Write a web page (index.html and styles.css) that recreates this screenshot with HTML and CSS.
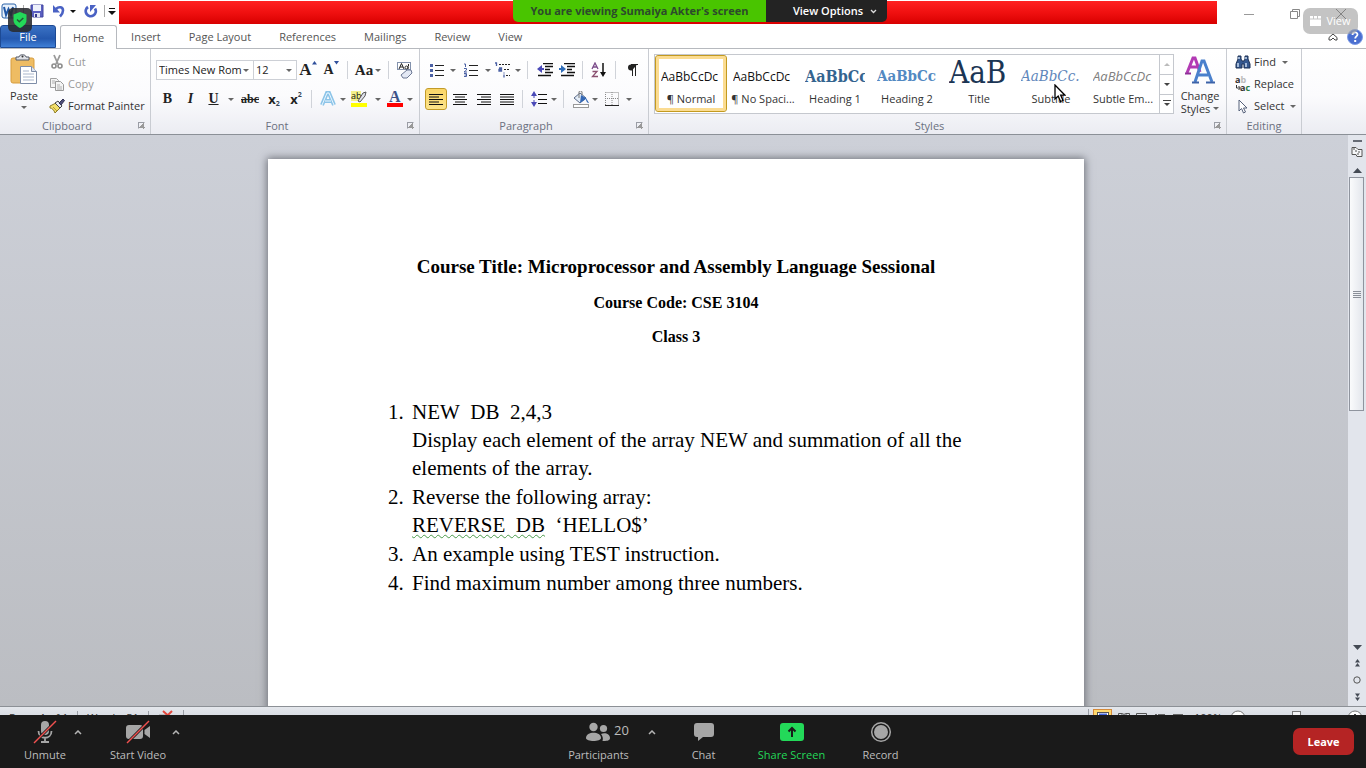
FILE: index.html
```html
<!DOCTYPE html>
<html lang="en">
<head>
<meta charset="utf-8">
<title>Sumaiya Akter's screen</title>
<link rel="stylesheet" href="styles.css">
</head>
<body>
<div class="word">
  <header class="titlebar">
    <div class="quick">
      <svg width="16" height="18" viewBox="0 0 16 18"><rect x="1" y="2" width="14" height="14" rx="2" fill="#e8f1fb" stroke="#2a62a8"/><path d="M3 5l2 8 2.500-6 2.500 6 2-8" fill="none" stroke="#1f56a5" stroke-width="2"/></svg>
      <span class="quick-sep"></span>
      <button class="plain" aria-label="Save"><svg width="14" height="14" viewBox="0 0 14 14"><path d="M1 1h12v12H2.500L1 11.500z" fill="#5a5fc0" stroke="#4347a0"/><rect x="3" y="1" width="8" height="6" fill="#eef1fb"/><rect x="4" y="9" width="6" height="4" fill="#dfe3ef"/><rect x="5" y="10" width="2" height="3" fill="#34388a"/></svg></button>
      <button class="plain undo" aria-label="Undo"><svg width="14" height="14" viewBox="0 0 14 14"><path d="M4 5c3-3 7-2 7 1.500 0 2.500-1 4-3 6" fill="none" stroke="#4a62c4" stroke-width="2.600"/><path d="M1 1v7.500h7z" fill="#4a62c4"/></svg></button>
      <span class="caret dark"></span>
      <button class="plain redo" aria-label="Repeat"><svg width="14" height="14" viewBox="0 0 14 14"><path d="M4 3a5 5 0 1 0 7 1.500" fill="none" stroke="#4a62c4" stroke-width="2.800"/><path d="M6 1v7l6-7z" fill="#4a62c4"/></svg></button>
      <span class="quick-sep last"></span>
      <button class="plain" aria-label="Customize toolbar"><svg width="8" height="8" viewBox="0 0 8 8"><path d="M1 1.500h6" stroke="#111"/><path d="M0 4h8L4 8z" fill="#111"/></svg></button>
    </div>
    <div class="redaction"></div>
    <div class="window-buttons">
      <button class="plain" aria-label="Minimize"><svg width="12" height="12" viewBox="0 0 12 12"><path d="M1 6.500h10" stroke="#999"/></svg></button>
      <button class="plain" aria-label="Restore"><svg width="12" height="12" viewBox="0 0 12 12"><path d="M1.500 3.500h7v7h-7zM3.500 3V1.500h7v7H9" fill="none" stroke="#888"/></svg></button>
      <button class="plain" aria-label="Close"><svg width="12" height="12" viewBox="0 0 12 12"><path d="M1 1l10 10M11 1L1 11" stroke="#555"/></svg></button>
    </div>
  </header>

  <nav class="tabs">
    <button class="tab file">File</button>
    <button class="tab active">Home</button>
    <button class="tab">Insert</button>
    <button class="tab">Page Layout</button>
    <button class="tab">References</button>
    <button class="tab">Mailings</button>
    <button class="tab">Review</button>
    <button class="tab">View</button>
    <div class="tab-tools">
      <button class="plain" aria-label="Minimize ribbon"><svg width="10" height="8" viewBox="0 0 10 8"><path d="M1 4.500L5 1l4 3.500V7H7L5 5 3 7H1z" fill="#fff" stroke="#444"/></svg></button>
      <button class="plain" aria-label="Help"><svg width="16" height="16" viewBox="0 0 16 16"><circle cx="8" cy="8" r="7.500" fill="#4a6fd0" stroke="#7d9be6"/><path d="M5.500 6c0-3.500 5-3.300 5-.5 0 1.900-2.300 1.900-2.300 4" fill="none" stroke="#fff" stroke-width="1.800"/><rect x="7.200" y="11" width="2" height="2" fill="#fff"/></svg></button>
    </div>
  </nav>

  <section class="ribbon">
    <div class="group clipboard">
      <div class="group-body">
        <button class="big-button paste">
          <svg width="28" height="32" viewBox="0 0 28 32"><rect x="1" y="4" width="23" height="25" rx="2" fill="#eebc63" stroke="#d79d3e"/><path d="M6 6V3h3c0-3 7-3 7 0h3v3z" fill="#dfe1e6" stroke="#555b68"/><circle cx="12.500" cy="2.500" r="1" fill="#333"/><path d="M10.500 12.500h11l5 5v12h-16z" fill="#fff" stroke="#7e8da8"/><path d="M21.500 12.500v5h5" fill="#dde4f0" stroke="#7e8da8"/><path d="M13 17h6M13 20h11M13 23h11M13 26h11" stroke="#a9b6cc"/></svg>
          <span>Paste</span><span class="caret"></span>
        </button>
        <div class="stack">
          <button class="row-button disabled"><svg width="16" height="16" viewBox="0 0 16 16"><path d="M5 1l4 9M11 1L7 10" stroke="#9a9a9a" stroke-width="1.800"/><circle cx="5" cy="12" r="2" fill="none" stroke="#8d8d8d" stroke-width="1.600"/><circle cx="11" cy="12" r="2" fill="none" stroke="#8d8d8d" stroke-width="1.600"/></svg>Cut</button>
          <button class="row-button disabled"><svg width="16" height="16" viewBox="0 0 16 16"><path d="M1.500 2.500h6l2 2v7h-8z" fill="#f4f4f4" stroke="#a0a0a0"/><path d="M6.500 5.500h5l3 3v6h-8z" fill="#f4f4f4" stroke="#999"/><path d="M3 5h3M3 7h3M8 9h3M8 11h5M8 13h5" stroke="#b0b0b0"/></svg>Copy</button>
          <button class="row-button"><svg width="16" height="16" viewBox="0 0 16 16"><path d="M1 8l6-3 4 5-5 5c-1-3-3-5-5-5z" fill="#f2df6b" stroke="#8f7d28"/><path d="M4 9l4 4" stroke="#b59c30"/><path d="M6 5l3-2 4 5-2 2z" fill="#e9edf5" stroke="#444"/><path d="M10 5l4-4 1.500 1.500L12 7z" fill="#4d4d78" stroke="#333355"/></svg>Format Painter</button>
        </div>
      </div>
      <div class="caption"><span>Clipboard</span><button class="launcher" aria-label="Clipboard options"></button></div>
    </div>

    <div class="group font">
      <div class="group-body rows">
        <div class="tool-row">
          <span class="combo combo-font"><select aria-label="Font"><option>Times New Rom</option></select><span class="caret"></span></span>
          <span class="combo combo-size"><select aria-label="Font size"><option>12</option></select><span class="caret"></span></span>
          <button class="tool w22 glyph g17" aria-label="Grow font">A<svg class="tip" width="5" height="4" viewBox="0 0 5 4"><path d="M0 3.500h5L2.500 0z" fill="#2f4f9b"/></svg></button>
          <button class="tool w24 glyph g14" aria-label="Shrink font">A<svg class="tip" width="5" height="4" viewBox="0 0 5 4"><path d="M0 0h5L2.500 3.500z" fill="#2f4f9b"/></svg></button>
          <span class="bar"></span>
          <button class="tool w32 glyph g15" aria-label="Change case">Aa<span class="caret"></span></button>
          <span class="bar"></span>
          <button class="tool w24" aria-label="Clear formatting"><svg width="18" height="18" viewBox="0 0 18 18"><rect x="1.500" y="1.500" width="13" height="7" fill="#fff" stroke="#8392ad"/><path d="M3 8l2.500-5.500L8 8M4 6h3M12 5v3M12 6.500c0-2-3-2-3 0s3 2 3 0M12.500 3v2" stroke="#222" fill="none"/><path d="M5 14l6-5h4l1 3-5 5H7z" fill="#e3e8f4" stroke="#6c7894"/></svg></button>
        </div>
        <div class="tool-row">
          <button class="tool w23 glyph g14">B</button>
          <button class="tool w23 glyph g14 italic">I</button>
          <button class="tool w23 glyph g14 under">U</button>
          <span class="caret-cell w12"><span class="caret"></span></span>
          <button class="tool w26 glyph g12 strike">abc</button>
          <button class="tool w22 x-glyph" aria-label="Subscript">x<sub>2</sub></button>
          <button class="tool w22 x-glyph" aria-label="Superscript">x<sup>2</sup></button>
          <span class="bar"></span>
          <button class="tool w24" aria-label="Text effects"><svg width="16" height="16" viewBox="0 0 16 16"><path d="M2 14L7 2h2l5 12M5 10h6" fill="none" stroke="#8cc4e8" stroke-width="4"/><path d="M2 14L7 2h2l5 12M5 10h6" fill="none" stroke="#eaf6ff" stroke-width="1"/></svg></button>
          <span class="caret-cell w6"><span class="caret"></span></span>
          <button class="tool w26" aria-label="Highlight colour"><svg width="18" height="18" viewBox="0 0 18 18"><rect x="1" y="1" width="10" height="10" fill="#f4f08a"/><text x="1" y="9" font-family="Open Sans, sans-serif" font-size="9" fill="#111">ab</text><path d="M8 11l5-8 3-1-1 4-5 6z" fill="#dfe2ea" stroke="#555"/><rect x="1" y="13" width="16" height="4" fill="#ffff00"/></svg></button>
          <span class="caret-cell w12"><span class="caret"></span></span>
          <button class="tool w22" aria-label="Font colour"><svg width="16" height="18" viewBox="0 0 16 18"><text x="2" y="12" font-family="Liberation Serif, serif" font-weight="bold" font-size="16" fill="#3d5388">A</text><rect y="13" width="16" height="4" fill="#f00"/></svg></button>
          <span class="caret-cell w8"><span class="caret"></span></span>
        </div>
      </div>
      <div class="caption"><span>Font</span><button class="launcher" aria-label="Font options"></button></div>
    </div>

    <div class="group paragraph">
      <div class="group-body rows">
        <div class="tool-row">
          <button class="tool w24" aria-label="Bullets"><svg width="14" height="14" viewBox="0 0 14 14"><path d="M5 2.500h9M5 7.500h9M5 12.500h9" stroke="#222"/><path d="M0 1h3v3H0zM0 6h3v3H0zM0 11h3v3H0z" fill="#4b61a5"/></svg></button>
          <span class="caret-cell w8"><span class="caret"></span></span>
          <button class="tool w28" aria-label="Numbering"><svg width="16" height="14" viewBox="0 0 16 14"><path d="M6 2.500h9M6 7.500h9M6 12.500h9" stroke="#222"/><path d="M1 1h1.500v3M1 5.500h2.500v1.500L1 9h3M1 10.500h2.500v3H1M1.500 12h2" fill="none" stroke="#4b61a5"/></svg></button>
          <span class="caret-cell w6"><span class="caret"></span></span>
          <button class="tool w24" aria-label="Multilevel list"><svg width="18" height="16" viewBox="0 0 18 16"><path d="M5 2.500h11M10 7.500h6M12 13.500h4" stroke="#222" stroke-dasharray="2 1"/><path d="M1 1h1.500v3M5 6h2.500v3H5V7.500h2M10 10.500v1M10 12.500v3" fill="none" stroke="#4b61a5" stroke-width="1.300"/></svg></button>
          <span class="caret-cell w6"><span class="caret"></span></span>
          <span class="bar wide"></span>
          <button class="tool w22" aria-label="Decrease indent"><svg width="16" height="14" viewBox="0 0 16 14"><path d="M6 .5h10M8 3.500h8M8 6.500h5M8 9.500h8M1 12.500h13" stroke="#111" stroke-width="1.500"/><path d="M5 2v3h2v2H5v3L0 6z" fill="#4a4ab8"/></svg></button>
          <button class="tool w22" aria-label="Increase indent"><svg width="16" height="14" viewBox="0 0 16 14"><path d="M5 .5h11M8 3.500h8M8 6.500h5M8 9.500h8M2 12.500h13" stroke="#111" stroke-width="1.500"/><path d="M2 2v3H0v2h2v3l5-4z" fill="#2f6db8"/></svg></button>
          <span class="bar"></span>
          <button class="tool w24" aria-label="Sort"><svg width="16" height="16" viewBox="0 0 16 16"><path d="M1 7l3-6 3 6M2 5h4" stroke="#7b4b8a" fill="none" stroke-width="1.300"/><path d="M1.500 9.500H6l-4.500 5H7" stroke="#8b5070" fill="none" stroke-width="1.300"/><path d="M12 1v10" stroke="#111" stroke-width="1.500"/><path d="M9 10h6l-3 5z" fill="#111"/></svg></button>
          <span class="bar"></span>
          <button class="tool w24" aria-label="Show marks"><svg width="12" height="14" viewBox="0 0 12 14"><path d="M11 1.500H5a3 3 0 0 0 0 6h1z" fill="#222"/><path d="M6.500 1v12M9.500 1v12M5 1.500h7" stroke="#222"/></svg></button>
        </div>
        <div class="tool-row">
          <button class="tool w22 pressed" aria-label="Align left"><svg width="14" height="11" viewBox="0 0 14 11"><path d="M0 .5h14M0 3h10M0 5.500h14M0 8h10M0 10.500h14" stroke="#111"/></svg></button>
          <button class="tool w26" aria-label="Align centre"><svg width="14" height="11" viewBox="0 0 14 11"><path d="M0 .5h14M2 3h10M0 5.500h14M2 8h10M0 10.500h14" stroke="#111"/></svg></button>
          <button class="tool w22" aria-label="Align right"><svg width="14" height="11" viewBox="0 0 14 11"><path d="M0 .5h14M4 3h10M0 5.500h14M4 8h10M0 10.500h14" stroke="#111"/></svg></button>
          <button class="tool w23" aria-label="Justify"><svg width="14" height="11" viewBox="0 0 14 11"><path d="M0 .5h14M0 3h14M0 5.500h14M0 8h14M0 10.500h14" stroke="#111"/></svg></button>
          <span class="bar"></span>
          <button class="tool w24" aria-label="Line spacing"><svg width="16" height="16" viewBox="0 0 16 16"><path d="M3 3v10" stroke="#4a4ab8" stroke-dasharray="4 2"/><path d="M0 5h6L3 0zM0 11h6l-3 5z" fill="#4a4ab8"/><path d="M7 3.500h9M7 8.500h9M7 12.500h9" stroke="#111"/></svg></button>
          <span class="caret-cell w6"><span class="caret"></span></span>
          <span class="bar wide"></span>
          <button class="tool w22" aria-label="Shading"><svg width="18" height="17" viewBox="0 0 18 17"><path d="M2 7l6-5 6 5-6 5z" fill="#e4edf8" stroke="#5a6a88"/><path d="M7 7V1c0-1.500 3-1.500 3 0v3" fill="none" stroke="#777"/><path d="M9 4l5 3 3 5c-2 0-3-2-3-4l-6 4z" fill="#3468b5"/><rect x="1.500" y="13.500" width="15" height="3" fill="#fff" stroke="#999"/></svg></button>
          <span class="caret-cell w6"><span class="caret"></span></span>
          <button class="tool w28" aria-label="Borders"><svg width="14" height="14" viewBox="0 0 14 14"><path d="M.5.500h13v12M.5 13V.5M7 0v13M0 6.500h14" fill="none" stroke="#888" stroke-dasharray="1 1"/><path d="M0 13.500h14" stroke="#222"/></svg></button>
          <span class="caret-cell w6"><span class="caret"></span></span>
        </div>
      </div>
      <div class="caption"><span>Paragraph</span><button class="launcher" aria-label="Paragraph options"></button></div>
    </div>

    <div class="group styles">
      <div class="group-body">
        <div class="gallery">
          <button class="style selected"><span class="sample">AaBbCcDc</span><span>¶ Normal</span></button>
          <button class="style"><span class="sample">AaBbCcDc</span><span>¶ No Spaci...</span></button>
          <button class="style"><span class="sample heading1">AaBbCc</span><span>Heading 1</span></button>
          <button class="style"><span class="sample heading2">AaBbCc</span><span>Heading 2</span></button>
          <button class="style"><span class="sample title">AaB</span><span>Title</span></button>
          <button class="style"><span class="sample subtitle">AaBbCc.</span><span>Subtitle</span></button>
          <button class="style"><span class="sample subtle">AaBbCcDc</span><span>Subtle Em...</span></button>
          <div class="gallery-scroll">
            <button class="plain" aria-label="Scroll up"><svg width="6" height="3" viewBox="0 0 6 3"><path d="M0 3h6L3 0z" fill="#bbb"/></svg></button>
            <button class="plain" aria-label="Scroll down"><svg width="6" height="3" viewBox="0 0 6 3"><path d="M0 0h6L3 3z" fill="#444"/></svg></button>
            <button class="plain" aria-label="More styles"><svg width="8" height="7" viewBox="0 0 8 7"><path d="M0 .5h8" stroke="#444"/><path d="M1 3h6L4 6z" fill="#444"/></svg></button>
          </div>
          <svg class="pointer" width="12" height="19" viewBox="0 0 12 19"><path d="M1 1v14l3.200-3 2.300 5.500 2.500-1-2.300-5.300H11z" fill="#fff" stroke="#000" stroke-width="1.300"/></svg>
        </div>
        <button class="big-button change-styles">
          <svg width="30" height="30" viewBox="0 0 30 30"><path d="M2 18L8 3h2l5 14M5 12h8" fill="none" stroke="#b23ab4" stroke-width="3"/><path d="M0 18.500h6" stroke="#8f2f98" stroke-width="2"/><path d="M10 27L17 6h2l8 21M13 20h10" fill="none" stroke="#4a80cc" stroke-width="3"/><path d="M7 27.500h7M21 27.500h9" stroke="#3c62a8" stroke-width="2"/></svg>
          <span>Change</span><span class="with-caret">Styles <span class="caret"></span></span>
        </button>
      </div>
      <div class="caption"><span>Styles</span><button class="launcher" aria-label="Style options"></button></div>
    </div>

    <div class="group editing">
      <div class="group-body">
        <div class="stack">
          <button class="row-button"><svg width="16" height="16" viewBox="0 0 16 16"><path d="M3 2h3v3l1 2h2l1-2V2h3v3l2 5v4H9v-4H7v4H1v-4l2-5z" fill="#35588f" stroke="#1d3155"/><path d="M3 9v4M11 9v4M4 3v2M11 3v2" stroke="#c7daf4" stroke-width="1.500"/></svg>Find<span class="caret"></span></button>
          <button class="row-button"><svg width="16" height="16" viewBox="0 0 16 16"><text x="0" y="7" font-family="Open Sans, sans-serif" font-weight="bold" font-size="9" fill="#333">a<tspan fill="#bbb">b</tspan></text><text x="5" y="15" font-family="Open Sans, sans-serif" font-weight="bold" font-size="9" fill="#333">a<tspan fill="#2a7d46">c</tspan></text><path d="M1.500 9v3H5M3.500 10L5.500 12l-2 2" fill="none" stroke="#333"/></svg>Replace</button>
          <button class="row-button"><svg width="16" height="16" viewBox="0 0 16 16"><path d="M4 2v11l2.500-2.500 2 4.500 2-1-2-4H12z" fill="#fff" stroke="#55607a"/></svg>Select<span class="caret"></span></button>
        </div>
      </div>
      <div class="caption"><span>Editing</span></div>
    </div>
  </section>

  <main class="workspace">
    <div class="canvas">
      <article class="page">
        <h1>Course Title: Microprocessor and Assembly Language Sessional</h1>
        <h2>Course Code: CSE 3104</h2>
        <h2>Class 3</h2>
        <ol>
          <li>NEW&nbsp; DB&nbsp; 2,4,3<br>Display each element of the array NEW and summation of all the elements of the array.</li>
          <li>Reverse the following array:<br><span class="grammar">REVERSE&nbsp; DB</span>&nbsp; ‘HELLO$’</li>
          <li>An example using TEST instruction.</li>
          <li>Find maximum number among three numbers.</li>
        </ol>
      </article>
    </div>
    <div class="scrollbar">
      <span class="split"></span>
      <button class="plain" aria-label="Ruler"><svg width="12" height="12" viewBox="0 0 12 12"><path d="M1 1.500h4l2 2h4v7H6l-1-2H1z" fill="#f5f6f8" stroke="#555"/><path d="M3 2v2M5 4v2M8 5v2M6 8h2" stroke="#555"/></svg></button>
      <button class="plain up" aria-label="Scroll up"><svg width="9" height="5" viewBox="0 0 9 5"><path d="M0 5h9L4.500 0z" fill="#444a54"/></svg></button>
      <div class="track"><div class="thumb"><svg width="8" height="7" viewBox="0 0 8 7"><path d="M0 .5h8M0 2.500h8M0 4.500h8M0 6.500h8" stroke="#8a8f98"/></svg></div></div>
      <button class="plain" aria-label="Scroll down"><svg width="9" height="5" viewBox="0 0 9 5"><path d="M0 0h9L4.500 5z" fill="#444a54"/></svg></button>
      <button class="plain" aria-label="Previous page"><svg width="7" height="8" viewBox="0 0 7 8"><path d="M1 3.500h5L3.500 0zM1 7.500h5L3.500 4z" fill="#444a54"/></svg></button>
      <button class="plain" aria-label="Browse object"><svg width="8" height="8" viewBox="0 0 8 8"><circle cx="4" cy="4" r="3.200" fill="none" stroke="#555"/></svg></button>
      <button class="plain" aria-label="Next page"><svg width="7" height="8" viewBox="0 0 7 8"><path d="M1 .5h5L3.500 4zM1 4.500h5L3.500 8z" fill="#444a54"/></svg></button>
    </div>
  </main>

  <footer class="status">
    <div class="status-inner">
      <span class="status-item">Page: 1 of 1</span>
      <span class="status-item">Words: 51</span>
      <span class="status-item"><svg width="16" height="16" viewBox="0 0 16 16"><path d="M1 5h8v9H1z" fill="#eee" stroke="#999"/><path d="M5 1l10 9M14 1L6 9" stroke="#e2473c" stroke-width="2"/></svg></span>
      <div class="status-views">
        <button class="plain view-on" aria-label="Print layout"><svg width="12" height="12" viewBox="0 0 12 12"><rect x=".5" y=".5" width="11" height="11" fill="#fff" stroke="#555"/><path d="M2 2.500h8" stroke="#46d" stroke-width="2"/></svg></button>
        <button class="plain" aria-label="Reading"><svg width="12" height="12" viewBox="0 0 12 12"><path d="M.5 1.500h4l1.500 1 1.500-1h4v9H.5zM3 3h2M7 3h2" fill="none" stroke="#555"/></svg></button>
        <button class="plain" aria-label="Web layout"><svg width="12" height="12" viewBox="0 0 12 12"><path d="M.5 1.500h10v9H.5zM3 4h6" fill="none" stroke="#555"/></svg></button>
        <button class="plain" aria-label="Outline"><svg width="12" height="12" viewBox="0 0 12 12"><path d="M1 2.500h2M4 2.500h7M3 6.500h8" stroke="#666"/></svg></button>
        <button class="plain" aria-label="Draft"><svg width="12" height="12" viewBox="0 0 12 12"><path d="M1 2.500h10M1 6.500h10" stroke="#666"/></svg></button>
      </div>
      <span class="percent">100%</span>
      <div class="zoomer">
        <button class="plain" aria-label="Zoom out"><svg width="16" height="16" viewBox="0 0 16 16"><circle cx="8" cy="8" r="7" fill="#fff" stroke="#777"/><path d="M4 8h8" stroke="#444" stroke-width="2"/></svg></button>
        <input type="range" aria-label="Zoom" min="0" max="100" value="50">
        <button class="plain" aria-label="Zoom in"><svg width="16" height="16" viewBox="0 0 16 16"><circle cx="8" cy="8" r="7" fill="#fff" stroke="#777"/><path d="M4 8h8M8 4v8" stroke="#444" stroke-width="2"/></svg></button>
      </div>
    </div>
  </footer>
</div>

<div class="meeting">
  <div class="meeting-set">
    <button class="action w50"><svg width="24" height="24" viewBox="0 0 24 24"><rect x="8" y="1" width="8" height="14" rx="4" fill="#a6a6a6"/><path d="M5.500 11c0 9 13 9 13 0M12 18v4M8 22h8" fill="none" stroke="#a6a6a6" stroke-width="1.800"/><path d="M1 23L23 1" stroke="#1a1a1a" stroke-width="3"/><path d="M1 23L23 1" stroke="#f0504f" stroke-width="1.500"/></svg>Unmute</button>
    <button class="more" aria-label="Audio options"><svg width="8" height="5" viewBox="0 0 8 5"><path d="M1 4l3-3 3 3" fill="none" stroke="#b5b5b5" stroke-width="1.500"/></svg></button>
    <button class="action w60 video"><svg width="26" height="24" viewBox="0 0 26 24"><rect x="1" y="5" width="17" height="14" rx="3" fill="#a6a6a6"/><path d="M19.500 10l5.500-4v12l-5.500-4z" fill="#a6a6a6"/><path d="M2 23L24 1" stroke="#1a1a1a" stroke-width="3"/><path d="M2 23L24 1" stroke="#f0504f" stroke-width="1.500"/></svg>Start Video</button>
    <button class="more" aria-label="Video options"><svg width="8" height="5" viewBox="0 0 8 5"><path d="M1 4l3-3 3 3" fill="none" stroke="#b5b5b5" stroke-width="1.500"/></svg></button>
  </div>
  <div class="meeting-set centre">
    <button class="action w64 people"><span class="people-row"><svg width="24" height="24" viewBox="0 0 24 24"><circle cx="7.500" cy="7" r="4.200" fill="#a6a6a6"/><circle cx="17.500" cy="8.500" r="3.600" fill="#a6a6a6"/><path d="M0 18c0-7 15-7 15 0 0 4-15 4-15 0z" fill="#a6a6a6"/><path d="M16.500 21c1-3 0-5-1.500-7 4-2 9 0 9 4 0 3-4 3-7.500 3z" fill="#a6a6a6"/></svg><span class="count">20</span></span>Participants</button>
    <button class="more people-more" aria-label="Participant options"><svg width="8" height="5" viewBox="0 0 8 5"><path d="M1 4l3-3 3 3" fill="none" stroke="#b5b5b5" stroke-width="1.500"/></svg></button>
    <button class="action w44 chat"><svg width="22" height="24" viewBox="0 0 22 24"><path d="M4 3h14a3 3 0 0 1 3 3v8a3 3 0 0 1-3 3h-8l-5 4v-4H4a3 3 0 0 1-3-3V6a3 3 0 0 1 3-3z" fill="#a6a6a6"/></svg>Chat</button>
    <button class="action w72 share"><svg width="24" height="24" viewBox="0 0 24 24"><rect y="3" width="24" height="18" rx="3" fill="#23d959"/><path d="M12 17V8M8.500 11.500L12 8l3.500 3.500" fill="none" stroke="#1a1a1a" stroke-width="2"/></svg>Share Screen</button>
    <button class="action w44 record"><svg width="22" height="24" viewBox="0 0 22 24"><circle cx="11" cy="12" r="9.300" fill="none" stroke="#a6a6a6" stroke-width="1.500"/><circle cx="11" cy="12" r="7" fill="#a6a6a6"/></svg>Record</button>
  </div>
  <button class="leave">Leave</button>
</div>

<div class="banner"><span class="viewing">You are viewing Sumaiya Akter's screen</span><button class="options">View Options<svg width="7" height="5" viewBox="0 0 7 5"><path d="M1 1l2.500 2.500L6 1" fill="none" stroke="#ddd" stroke-width="1.300"/></svg></button></div>
<div class="shield"><svg width="14" height="16" viewBox="0 0 14 16"><path d="M7 0l6.500 2.500V8c0 4-3.500 6.500-6.500 8C4 14.500.5 12 .5 8V2.500z" fill="#23d959"/><path d="M4 7.500l2.300 2.300L10.300 6" fill="none" stroke="#265a35" stroke-width="1.500"/></svg></div>
<button class="view-mode"><svg width="11" height="10" viewBox="0 0 11 10"><path d="M0 0h3v2.500H0zM4 0h3v2.500H4zM8 0h3v2.500H8zM0 3.500h11V10H0z" fill="#fff"/></svg>View</button>
</body>
</html>
```
FILE: styles.css
```css
* { box-sizing: border-box; }
body {
  margin: 0;
  height: 100vh;
  overflow: hidden;
  display: flex;
  flex-direction: column;
  position: relative;
  font: 11px/14px "Open Sans", "Noto Sans", sans-serif;
  color: #333;
  background: #fff;
}
button, select, input { font: inherit; color: inherit; margin: 0; padding: 0; }
button { border: 0; background: none; }
svg { display: block; flex: none; }
.plain { display: flex; align-items: center; justify-content: center; }
.word { flex: 1; min-height: 0; display: flex; flex-direction: column; }

.caret {
  width: 0; height: 0; flex: none;
  border: 3px solid transparent;
  border-top-color: #666;
  border-bottom-width: 0;
}
.caret.dark { border-top-color: #111; }

/* title bar */
.titlebar { display: flex; height: 24px; flex: none; }
.quick { display: flex; align-items: center; width: 119px; padding: 0 3px 2px 1px; gap: 4px; flex: none; }
.quick-sep { width: 1px; height: 12px; background: #aaa; margin: 0 2px; flex: none; }
.quick-sep.last { margin: 0 -1px 0 0; }
.undo { margin-left: 4px; }
.redo { margin: 0 2px 0 4px; }
.redaction { flex: 1; margin-top: 1px; background: linear-gradient(#ff2222, #f01010 50%, #d80000); }
.window-buttons { display: flex; align-items: center; gap: 34px; padding: 4px 19px 0 26px; flex: none; }

/* ribbon tabs */
.tabs { display: flex; height: 25px; flex: none; align-items: stretch; padding-top: 1px; border-bottom: 1px solid #b6b9be; color: #555; }
.tab { padding: 0 14px; border-radius: 3px 3px 0 0; }
.file { width: 56px; margin-right: 4px; color: #fff; background: linear-gradient(#3b72c4, #2458ae 60%, #3f7fd6); border: 1px solid #1d4a94; }
.active { padding: 0 12px; border: 1px solid #b6b9be; border-bottom: 0; background: #fff; margin-bottom: -1px; }
.tab-tools { margin-left: auto; display: flex; align-items: center; gap: 9px; padding-right: 3px; }

/* ribbon */
.ribbon { display: flex; flex: none; height: 86px; background: linear-gradient(#fff, #fbfbfd 55%, #ebecf2); border-bottom: 1px solid #8b9097; }
.group { display: flex; flex-direction: column; border-right: 1px solid #c9ccd2; flex: none; }
.group-body { flex: 1; display: flex; padding-top: 2px; }
.caption { height: 17px; display: flex; align-items: center; color: #6b7080; padding: 0 5px 0 0; }
.caption span { flex: 1; text-align: center; }
.launcher { width: 7px; height: 7px; margin-left: 4px; border: 1px solid #9a9da5; border-right-color: transparent; border-bottom-color: transparent; background: linear-gradient(135deg, transparent 50%, #999 50%); }
.clipboard { width: 151px; }
.font { width: 269px; }
.paragraph { width: 229px; }
.styles { width: 578px; }
.editing { width: 75px; }
.editing .caption { padding: 0; }

.big-button { display: flex; flex-direction: column; align-items: center; line-height: 13px; }
.paste { width: 48px; padding-top: 3px; }
.paste .caret { margin-top: 4px; }
.paste > span:nth-of-type(1) { margin-top: 3px; }
.stack { display: flex; flex-direction: column; }
.row-button { display: flex; align-items: center; gap: 3px; height: 22px; white-space: nowrap; }
.row-button .caret { margin-left: 3px; }
.clipboard .stack { padding-left: 1px; }
.disabled { color: #999; }
.editing .stack { padding-left: 8px; }

.rows { flex-direction: column; padding: 8px 5px 0 5px; gap: 3px; }
.tool-row { display: flex; align-items: center; height: 26px; }
.tool { height: 22px; display: flex; align-items: center; justify-content: center; flex: none; }
.w6 { width: 6px; } .w8 { width: 8px; } .w12 { width: 12px; }
.w22 { width: 22px; } .w23 { width: 23px; } .w24 { width: 24px; } .w26 { width: 26px; } .w28 { width: 28px; } .w32 { width: 32px; }
.w44 { width: 44px; } .w50 { width: 50px; } .w60 { width: 60px; } .w64 { width: 64px; } .w72 { width: 72px; }
.caret-cell { display: flex; justify-content: center; flex: none; }
.bar { width: 9px; height: 18px; flex: none; background: linear-gradient(#d0d3d9, #d0d3d9) center / 1px 100% no-repeat; }
.bar.wide { width: 13px; }
.combo { display: grid; align-items: center; height: 20px; border: 1px solid #cdd0d6; background: #fff; color: #222; flex: none; }
.combo select { grid-area: 1 / 1; appearance: none; border: 0; background: none; padding-left: 2px; width: 100%; }
.combo .caret { grid-area: 1 / 1; justify-self: end; margin-right: 4px; pointer-events: none; }
.combo-font { width: 98px; }
.combo-size { width: 43px; border-left: 0; }
.glyph { font-family: "Liberation Serif", serif; font-weight: bold; color: #222; }
.g17 { font-size: 17px; } .g15 { font-size: 15px; } .g14 { font-size: 14px; } .g12 { font-size: 12px; }
.tip { align-self: flex-start; margin-top: 2px; }
.glyph .caret { margin-left: 2px; }
.italic { font-style: italic; }
.under { text-decoration: underline; }
.strike { text-decoration: line-through; }
.x-glyph { font-weight: bold; font-size: 13px; color: #222; }
.x-glyph sub, .x-glyph sup { font-size: 7px; line-height: 7px; color: #345; }
.x-glyph sub { align-self: flex-end; margin-bottom: 3px; }
.x-glyph sup { align-self: flex-start; margin-top: 3px; }
.pressed { border: 1px solid #c29b29; border-radius: 3px; background: linear-gradient(#fbd667, #fbe38a); }

.gallery { position: relative; display: flex; height: 60px; margin: 3px 0 0 5px; border: 1px solid #c5c8ce; background: #fff; flex: none; }
.style { width: 72px; display: flex; flex-direction: column; align-items: center; overflow: hidden; white-space: nowrap; padding: 0 6px; }
.selected { border: 1px solid #c39a20; border-radius: 3px; box-shadow: inset 0 0 0 3px #fbdc92; padding: 0 5px; margin-bottom: 1px; }
.sample { height: 37px; width: 100%; overflow: hidden; font-size: 12px; line-height: 43px; color: #111; text-align: left; }
.selected .sample { height: 36px; line-height: 41px; }
.heading1, .heading2, .title, .subtitle { font-family: "DejaVu Serif Condensed", "DejaVu Serif", serif; }
.heading1 { font-weight: bold; font-size: 16px; color: #34648f; }
.heading2 { font-weight: bold; font-size: 15px; color: #5289c2; }
.title { font-size: 31px; line-height: 35px; color: #1b3554; }
.subtitle { font-style: italic; font-size: 15px; color: #5f87bb; }
.subtle { font-style: italic; font-size: 13px; color: #808080; }
.gallery-scroll { display: grid; grid-template-rows: repeat(3, 1fr); width: 14px; border-left: 1px solid #c5c8ce; }
.gallery-scroll .plain + .plain { border-top: 1px solid #c5c8ce; }
.pointer { position: absolute; left: 399px; top: 29px; }
.change-styles { width: 50px; margin: 3px 0 0 1px; padding-top: 1px; line-height: 13px; }
.change-styles > span:nth-of-type(1) { margin-top: 4px; }
.with-caret { display: flex; align-items: center; gap: 3px; }

/* document */
.workspace { flex: 1; min-height: 0; display: flex; background: linear-gradient(#cdd0d8, #bbbdc2); border-bottom: 1px solid #8c9096; }
.canvas { flex: 1; min-width: 0; overflow: hidden; padding: 24px 0 0 4px; }
.page { max-width: 816px; min-height: 1056px; margin: 0 auto; padding: 96px 96px 0; background: #fff; box-shadow: 0 0 8px 1px #6d7078; color: #000; font-family: "Liberation Serif", serif; }
.page h1 { margin: 0; text-align: center; font-size: 19px; line-height: 23px; }
.page h2 { margin: 16px 0 0; text-align: center; font-size: 16px; line-height: 18px; }
.page ol { margin: 52px 0 0; padding-left: 45px; font-size: 21px; line-height: 28px; }
.page li { padding-left: 3px; margin-bottom: 1px; }
.grammar { text-decoration: underline wavy #4a9a4a 1px; text-underline-offset: 2px; }

.scrollbar { width: 18px; display: flex; flex-direction: column; align-items: center; background: #e2e5ec; padding: 5px 0 5px; flex: none; gap: 9px; }
.split { width: 9px; height: 2px; background: #666b75; margin-bottom: -5px; }
.scrollbar .up { margin-bottom: -5px; margin-top: 1px; }
.track { flex: 1; align-self: stretch; padding: 0 2px 0 1px; }
.thumb { height: 51%; display: flex; align-items: center; justify-content: center; border: 1px solid #8f949e; background: linear-gradient(90deg, #fafbfc, #e3e6ec); }

.status { height: 8px; flex: none; overflow: hidden; color: #333; }
.status-inner { height: 22px; display: flex; align-items: center; background: linear-gradient(#e4e7ec, #d3d7df 60%); padding-right: 3px; }
.status-item { padding: 0 9px; border-right: 1px solid #9a9ea6; }
.status-views { margin-left: auto; display: flex; gap: 6px; border-left: 1px solid #9a9ea6; padding-left: 4px; align-items: center; }
.view-on { width: 19px; height: 19px; background: #ffd96e; border: 1px solid #d58a3a; }
.percent { margin: 0 8px 0 10px; }
.zoomer { display: flex; align-items: center; }
.zoomer input { width: 101px; height: 14px; appearance: none; background: none; }
.zoomer input::-webkit-slider-thumb { appearance: none; width: 9px; height: 14px; background: #f4f4f6; border: 1px solid #777; }

/* meeting controls */
.meeting { flex: none; height: 53px; display: flex; justify-content: space-between; background: #1a1a1a; color: #bdbdbd; padding: 0 12px 0 20px; }
.meeting-set { display: flex; }
.centre { padding-right: 8px; }
.action { display: flex; flex-direction: column; align-items: center; padding-top: 5px; gap: 4px; white-space: nowrap; }
.more { width: 16px; display: flex; justify-content: center; padding-top: 15px; align-items: flex-start; }
.video { margin-left: 22px; }
.people-row { display: flex; gap: 4px; padding-left: 18px; }
.count { font-size: 13px; line-height: 20px; }
.people-more { margin-left: 13px; }
.chat { margin-left: 22px; }
.share { margin-left: 30px; color: #23d959; }
.record { margin-left: 31px; }
.leave { align-self: center; width: 61px; height: 27px; border-radius: 7px; background: #b52424; color: #fff; font-weight: bold; }

/* overlays over the shared screen */
.banner { position: absolute; top: 0; left: 513px; display: flex; height: 22px; border-radius: 0 0 5px 5px; overflow: hidden; font-weight: 600; }
.viewing { width: 253px; text-align: center; line-height: 22px; background: #49c500; color: #2c4a2c; font-weight: bold; }
.options { width: 121px; display: flex; align-items: center; justify-content: center; gap: 7px; background: #232323; color: #fff; padding-left: 20px; padding-right: 3px; }
.shield { position: absolute; left: 8px; top: 8px; width: 24px; height: 24px; border-radius: 5px; background: rgba(40, 42, 46, 0.88); display: flex; align-items: center; justify-content: center; }
.view-mode { position: absolute; right: 8px; top: 8px; width: 55px; height: 26px; border-radius: 7px; background: rgba(160, 160, 160, 0.62); color: #fff; display: flex; align-items: center; justify-content: center; gap: 5px; }
```
